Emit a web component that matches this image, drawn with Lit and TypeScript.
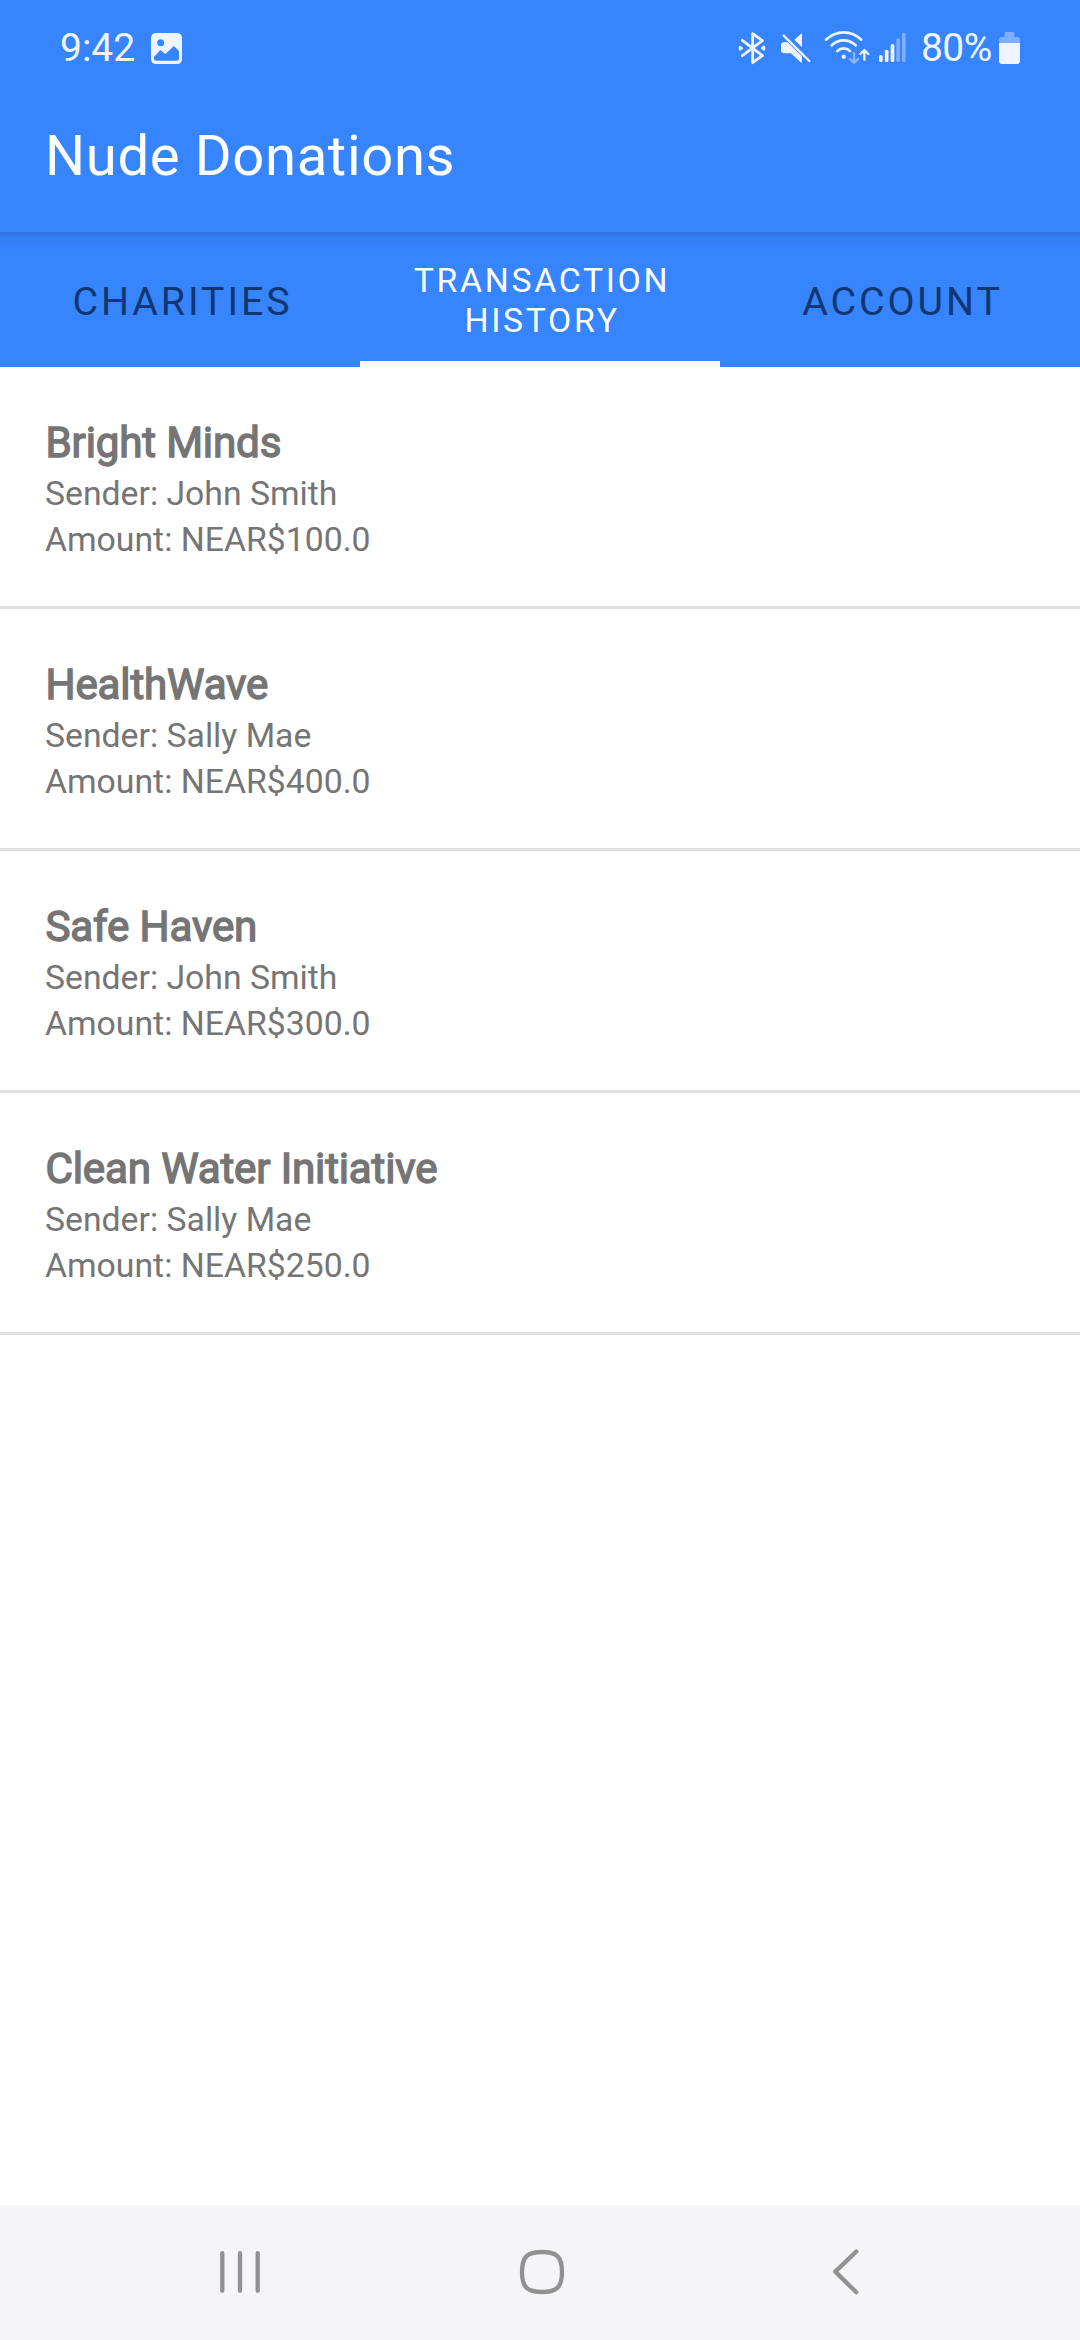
import { LitElement, html, css, svg } from "lit";
import { customElement, property } from "lit/decorators.js";

interface Donation {
  charity: string;
  sender: string;
  amount: string;
}

const DONATIONS: Donation[] = [
  { charity: "Bright Minds", sender: "John Smith", amount: "100.0" },
  { charity: "HealthWave", sender: "Sally Mae", amount: "400.0" },
  { charity: "Safe Haven", sender: "John Smith", amount: "300.0" },
  { charity: "Clean Water Initiative", sender: "Sally Mae", amount: "250.0" },
];

@customElement("status-bar")
export class StatusBar extends LitElement {
  static styles = css`
    :host {
      display: flex;
      justify-content: space-between;
      height: 96px;
      box-sizing: border-box;
      padding: 28px 59px 0 60px;
      color: #eff5ff;
      font-size: 39px;
      line-height: 40px;
    }
    .side {
      display: flex;
      height: 40px;
    }
    svg {
      display: block;
      height: 40px;
      flex: none;
    }
    .time { width: 88px; white-space: nowrap; }
    .picture { width: 37px; }
    .bluetooth { width: 34px; margin-right: 8px; }
    .mute { width: 34px; margin-right: 10px; }
    .wifi { width: 50px; margin-right: 5px; }
    .signal { width: 31px; }
    .percent { width: 77px; padding-left: 13px; white-space: nowrap; letter-spacing: -0.6px; }
    .battery { width: 23px; }
  `;

  render() {
    return html`
      <div class="side">
        <span class="time">9:42</span>
        <svg class="picture" viewBox="324 54 111 120">
          <path fill="#eff5ff" fill-rule="evenodd"
            d="M349 69H410Q426 69 426 85V146Q426 162 410 162H349Q333 162 333 146V85Q333 69 349 69Z
               M362 88A10.500 10.500 0 1 0 362 109A10.500 10.500 0 1 0 362 88Z
               M342 141V146Q342 152 348 152H411Q417 152 417 146V123L402 108L376 132L361 120Z" />
        </svg>
      </div>
      <div class="side">
        <svg class="bluetooth" viewBox="48 39 102 120">
          <path d="M67 76L127 122L98 143V56L127 77L67 122" fill="none" stroke="#eff5ff"
            stroke-width="8.500" stroke-linecap="round" stroke-linejoin="round" />
          <path d="M58 92Q61 90 70 99.500Q61 109 58 107Q54 100 58 92Z
                   M134 92Q131 90 122 99.500Q131 109 134 107Q138 100 134 92Z" fill="#eff5ff" />
        </svg>
        <svg class="mute" viewBox="174 39 102 120">
          <path d="M223 74L243 56Q246 54 246 58V97Z" fill="#eff5ff" />
          <path d="M192 82H203L246 124V140Q246 145 242 142L213 115H192Q183 115 183 106V91Q183 82 192 82Z" fill="#eff5ff" />
          <path d="M191 62L268 138" stroke="#eff5ff" stroke-width="7" stroke-linecap="round" />
        </svg>
        <svg class="wifi" viewBox="306 39 150 120">
          <g fill="none" stroke="#eff5ff" stroke-width="8" stroke-linecap="round">
            <path d="M318 74Q341 52 371 52T424 74" />
            <path d="M335 91Q351 76 371 76T407 91" />
            <path d="M352 108Q360 100 371 100T390 108" />
          </g>
          <circle cx="371" cy="125" r="6.500" fill="#eff5ff" />
          <path d="M402 114V143M390 132L402 144L414 132" fill="none" stroke="#8db8ff" stroke-width="7" stroke-linecap="round" stroke-linejoin="round" />
          <path d="M433 134V106M421 117L433 105L445 117" fill="none" stroke="#eff5ff" stroke-width="7" stroke-linecap="round" stroke-linejoin="round" />
        </svg>
        <svg class="signal" viewBox="51 39 93 120">
          ${[
            { x: 57, y: 120, on: true },
            { x: 74.5, y: 104, on: true },
            { x: 92, y: 87, on: true },
            { x: 109, y: 70, on: false },
            { x: 126, y: 53, on: false },
          ].map(
            (b) => svg`<rect x=${b.x} y=${b.y} width="11" height=${141 - b.y} rx="4.500"
              fill=${b.on ? "#eff5ff" : "#7eaeff"} />`
          )}
        </svg>
        <span class="percent">80%</span>
        <svg class="battery" viewBox="414 39 69 120">
          <path d="M417 84V74Q417 66 425 66H434V55Q434 51 438 51H459Q463 51 463 55V66H472Q480 66 480 74V84Z" fill="#7eaeff" />
          <path d="M417 84H480V138Q480 147 471 147H426Q417 147 417 138Z" fill="#eff5ff" />
        </svg>
      </div>
    `;
  }
}

@customElement("donation-row")
export class DonationRow extends LitElement {
  @property({ attribute: false }) donation!: Donation;

  static styles = css`
    :host {
      display: block;
      height: 242px;
      box-sizing: border-box;
      padding: 49px 45px 0;
      border-bottom: 3px solid #e0e0e0;
      color: #757575;
      white-space: nowrap;
    }
    .charity {
      padding-left: 0.5px;
      margin-bottom: 2px;
      font-size: 42.1875px;
      line-height: 53px;
      letter-spacing: -0.18px;
      -webkit-text-stroke: 1.4px #757575;
    }
    .detail {
      font-size: 33.75px;
      line-height: 46px;
    }
  `;

  render() {
    return html`
      <div class="charity">${this.donation.charity}</div>
      <div class="detail">Sender: ${this.donation.sender}</div>
      <div class="detail">Amount: NEAR$${this.donation.amount}</div>
    `;
  }
}

@customElement("nav-bar")
export class NavBar extends LitElement {
  static styles = css`
    :host {
      display: flex;
      justify-content: space-between;
      height: 135px;
      box-sizing: border-box;
      padding: 41px 210px 0;
      background: #f5f5f7;
    }
    svg {
      display: block;
      width: 60px;
      height: 52px;
      fill: none;
      stroke: #919191;
      stroke-width: 4.3;
      stroke-linecap: round;
      stroke-linejoin: round;
    }
    .home { margin-left: 4px; }
  `;

  render() {
    return html`
      <svg viewBox="0 0 60 52"><path d="M12.300 7.200V44.800M30 7.200V44.800M47.700 7.200V44.800" /></svg>
      <svg class="home" viewBox="0 0 60 52">
        <path d="M30 6C45 6 50 11 50 26S45 46 30 46S10 41 10 26S15 6 30 6Z" />
      </svg>
      <svg viewBox="0 0 60 52"><path d="M46.300 5.500L25.300 25.600L46.300 46.300" /></svg>
    `;
  }
}

@customElement("app-root")
export class AppRoot extends LitElement {
  static styles = css`
    :host {
      display: flex;
      flex-direction: column;
      width: 1080px;
      height: 2340px;
      overflow: hidden;
      background: #fff;
      font-family: Roboto, "Liberation Sans", sans-serif;
    }
    .header {
      height: 232px;
      background: #3784ff;
      flex: none;
    }
    .title {
      padding-left: 45px;
      color: #fff;
      font-size: 56.25px;
      line-height: 120px;
      letter-spacing: 0.62px;
    }
    .tabs {
      display: grid;
      grid-template-columns: repeat(3, 1fr);
      height: 135px;
      flex: none;
      background: linear-gradient(rgba(0, 0, 0, 0.13), rgba(0, 0, 0, 0.05) 6px, rgba(0, 0, 0, 0) 18px), #3784ff;
    }
    .tab {
      display: flex;
      align-items: center;
      justify-content: center;
      text-align: center;
      box-sizing: border-box;
      padding: 3px 0 0 5px;
      color: #12366f;
      font-size: 39.375px;
      letter-spacing: 2.9px;
    }
    .tab.active {
      padding: 8px 32px 0 36px;
      border-bottom: 6px solid #fff;
      color: #fff;
      font-size: 33.75px;
      line-height: 40px;
      letter-spacing: 2.68px;
    }
    .list { flex: 1; }
  `;

  render() {
    return html`
      <header class="header">
        <status-bar></status-bar>
        <div class="title">Nude Donations</div>
      </header>
      <nav class="tabs">
        <div class="tab">CHARITIES</div>
        <div class="tab active">TRANSACTION HISTORY</div>
        <div class="tab">ACCOUNT</div>
      </nav>
      <main class="list">
        ${DONATIONS.map((d) => html`<donation-row .donation=${d}></donation-row>`)}
      </main>
      <nav-bar></nav-bar>
    `;
  }
}
